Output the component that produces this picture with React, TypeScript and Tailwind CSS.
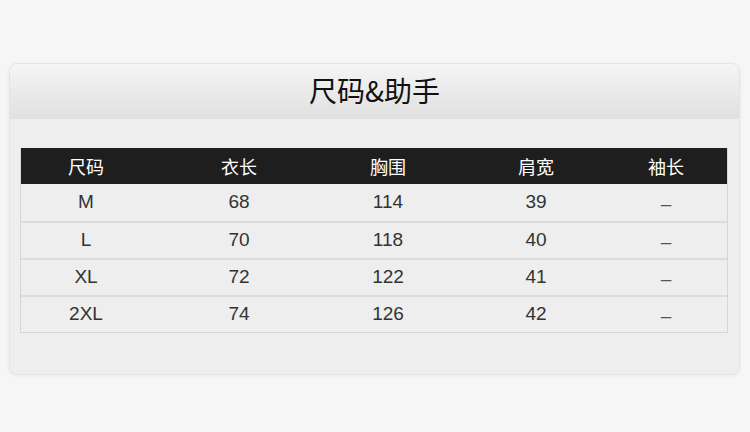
const columns = ["尺码", "衣长", "胸围", "肩宽", "袖长"];

const rows = [
  ["M", "68", "114", "39", "–"],
  ["L", "70", "118", "40", "–"],
  ["XL", "72", "122", "41", "–"],
  ["2XL", "74", "126", "42", "–"],
];

// column widths tuned so the centres line up with the picture
const widths = ["w-[130px]", "w-[176px]", "w-[122px]", "w-[174px]", "w-[86px]"];

const SizeChart = () => {
  return (
    <div className="w-[750px] h-[432px] bg-[#f6f6f6] pt-[63px] pl-[9px]">
      <div className="w-[731px] h-[312px] rounded-[8px] bg-[#eeeeee] border border-[#e4e4e4] shadow-[0_1px_4px_rgba(0,0,0,0.06)] overflow-hidden">
        <div className="h-[55px] bg-gradient-to-b from-[#f5f5f5] to-[#e0e0e0] flex items-center justify-center">
          <h2 className="text-[28px] leading-none text-[#111] font-['Noto_Sans_CJK_SC',sans-serif] pb-[4px]">
            尺码&amp;助手
          </h2>
        </div>
        <div className="pt-[29px] pl-[10px]">
          <div className="w-[708px] border-x border-b border-[#d6d6d6]">
            <div className="flex h-[36px] bg-[#1e1e1e] items-center">
              {columns.map((c, i) => (
                <div
                  key={c}
                  className={`${widths[i]} text-center text-white text-[18px] font-['Noto_Sans_CJK_SC',sans-serif]`}
                >
                  {c}
                </div>
              ))}
            </div>
            {rows.map((r, ri) => (
              <div
                key={r[0]}
                className={`flex h-[37px] items-center ${ri > 0 ? "border-t-2 border-[#dcdcdc]" : ""}`}
              >
                {r.map((v, i) => (
                  <div
                    key={i}
                    className={`${widths[i]} text-center text-[19px] font-['Liberation_Sans',Arial,sans-serif] ${
                      i === 4 ? "text-[#555] text-[16px] pt-[4px]" : "text-[#333]"
                    }`}
                  >
                    {v}
                  </div>
                ))}
              </div>
            ))}
          </div>
        </div>
      </div>
    </div>
  );
};

export default function App() {
  return <SizeChart />;
}
